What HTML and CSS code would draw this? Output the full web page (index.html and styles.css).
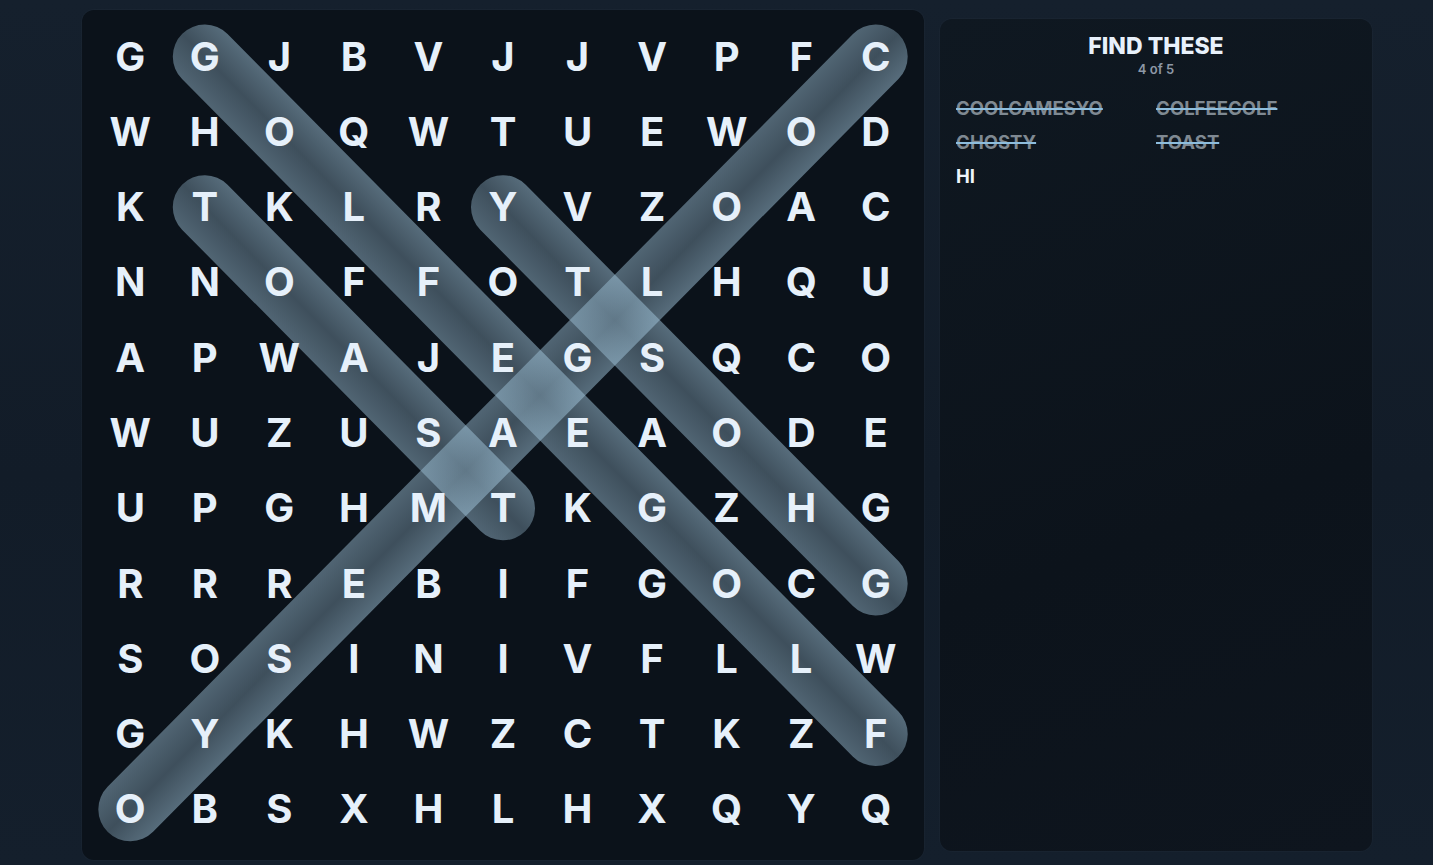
FILE: index.html
```html
<!DOCTYPE html>
<html lang="en">
<head>
<meta charset="utf-8">
<title>Word Search</title>
<link rel="stylesheet" href="styles.css">
</head>
<body>
<main class="page">
  <section class="board">
    <svg class="marks" width="842" height="850" viewBox="0 0 842 850" aria-hidden="true">
      <defs>
        <linearGradient id="pill" x1="0" y1="0" x2="0" y2="1">
          <stop offset="0" stop-color="#a2c6dc" stop-opacity="0.5"/>
          <stop offset="0.5" stop-color="#a2c6dc" stop-opacity="0.34"/>
          <stop offset="1" stop-color="#a2c6dc" stop-opacity="0.46"/>
        </linearGradient>
      </defs>
      <rect x="90.8" y="14.6" width="1017.5" height="64" rx="32" fill="url(#pill)" transform="rotate(45.28 122.8 46.6)"/>
      <rect x="761.7" y="14.6" width="1123.3" height="64" rx="32" fill="url(#pill)" transform="rotate(134.72 793.7 46.6)"/>
      <rect x="90.8" y="165.2" width="487.8" height="64" rx="32" fill="url(#pill)" transform="rotate(45.28 122.8 197.2)"/>
      <rect x="389" y="165.2" width="593.6" height="64" rx="32" fill="url(#pill)" transform="rotate(45.28 421 197.2)"/>
    </svg>
    <div class="grid">
      <span>G</span><span>G</span><span>J</span><span>B</span><span>V</span><span>J</span><span>J</span><span>V</span><span>P</span><span>F</span><span>C</span>
      <span>W</span><span>H</span><span>O</span><span>Q</span><span>W</span><span>T</span><span>U</span><span>E</span><span>W</span><span>O</span><span>D</span>
      <span>K</span><span>T</span><span>K</span><span>L</span><span>R</span><span>Y</span><span>V</span><span>Z</span><span>O</span><span>A</span><span>C</span>
      <span>N</span><span>N</span><span>O</span><span>F</span><span>F</span><span>O</span><span>T</span><span>L</span><span>H</span><span>Q</span><span>U</span>
      <span>A</span><span>P</span><span>W</span><span>A</span><span>J</span><span>E</span><span>G</span><span>S</span><span>Q</span><span>C</span><span>O</span>
      <span>W</span><span>U</span><span>Z</span><span>U</span><span>S</span><span>A</span><span>E</span><span>A</span><span>O</span><span>D</span><span>E</span>
      <span>U</span><span>P</span><span>G</span><span>H</span><span>M</span><span>T</span><span>K</span><span>G</span><span>Z</span><span>H</span><span>G</span>
      <span>R</span><span>R</span><span>R</span><span>E</span><span>B</span><span>I</span><span>F</span><span>G</span><span>O</span><span>C</span><span>G</span>
      <span>S</span><span>O</span><span>S</span><span>I</span><span>N</span><span>I</span><span>V</span><span>F</span><span>L</span><span>L</span><span>W</span>
      <span>G</span><span>Y</span><span>K</span><span>H</span><span>W</span><span>Z</span><span>C</span><span>T</span><span>K</span><span>Z</span><span>F</span>
      <span>O</span><span>B</span><span>S</span><span>X</span><span>H</span><span>L</span><span>H</span><span>X</span><span>Q</span><span>Y</span><span>Q</span>
    </div>
  </section>
  <aside class="panel">
    <h1 class="title">FIND THESE</h1>
    <p class="count">4 of 5</p>
    <ul class="words">
      <li class="found">COOLGAMESYO</li>
      <li class="found">GOLFEEGOLF</li>
      <li class="found">GHOSTY</li>
      <li class="found">TOAST</li>
      <li>HI</li>
    </ul>
  </aside>
</main>
</body>
</html>
```
FILE: styles.css
```css
* { box-sizing: border-box; }
html, body { margin: 0; padding: 0; }
body {
  width: 1433px;
  height: 865px;
  overflow: hidden;
  background: linear-gradient(180deg, #15202d 0%, #121c28 55%, #141f2c 100%);
  font-family: Inter, "Noto Sans", "Liberation Sans", sans-serif;
  color: #e8f1fb;
}
.page {
  display: flex;
  align-items: center;
  gap: 16px;
  padding: 10px 0 0 82px;
}
.board {
  position: relative;
  width: 842px;
  height: 850px;
  flex: none;
  border-radius: 12px;
  background: #0b121a;
  box-shadow: 0 0 0 1px rgba(255,255,255,0.02);
}
.marks {
  position: absolute;
  left: 0;
  top: 0;
}
.grid {
  position: relative;
  height: 100%;
  padding: 9px 11px 13px;
  display: grid;
  grid-template-columns: repeat(11, 1fr);
  grid-template-rows: repeat(11, 1fr);
}
.grid span {
  display: flex;
  align-items: center;
  justify-content: center;
  font-size: 40px;
  font-weight: 700;
  line-height: 1;
  color: #e6f0fa;
}
.panel {
  width: 432px;
  height: 832px;
  flex: none;
  border-radius: 12px;
  background: linear-gradient(160deg, #0f1821 0%, #0c131b 60%, #0e151e 100%);
  box-shadow: 0 0 0 1px rgba(255,255,255,0.02);
  padding: 14px 16px;
}
.title {
  margin: 0;
  text-align: center;
  font-size: 23px;
  font-weight: 800;
  line-height: 26px;
  color: #e8f1fb;
}
.count {
  margin: 2px 0 0;
  text-align: center;
  font-size: 13px;
  font-weight: 600;
  color: #8d98a6;
}
.words {
  list-style: none;
  margin: 20px 0 0;
  padding: 0;
  display: grid;
  grid-template-columns: 1fr 1fr;
  row-gap: 12px;
}
.words li {
  font-size: 18.5px;
  font-weight: 700;
  line-height: 22px;
  color: #eef4fa;
}
.words li.found {
  color: #7f8992;
  text-decoration: line-through;
  text-decoration-color: #8dbddd;
  text-decoration-thickness: 2px;
}
```
